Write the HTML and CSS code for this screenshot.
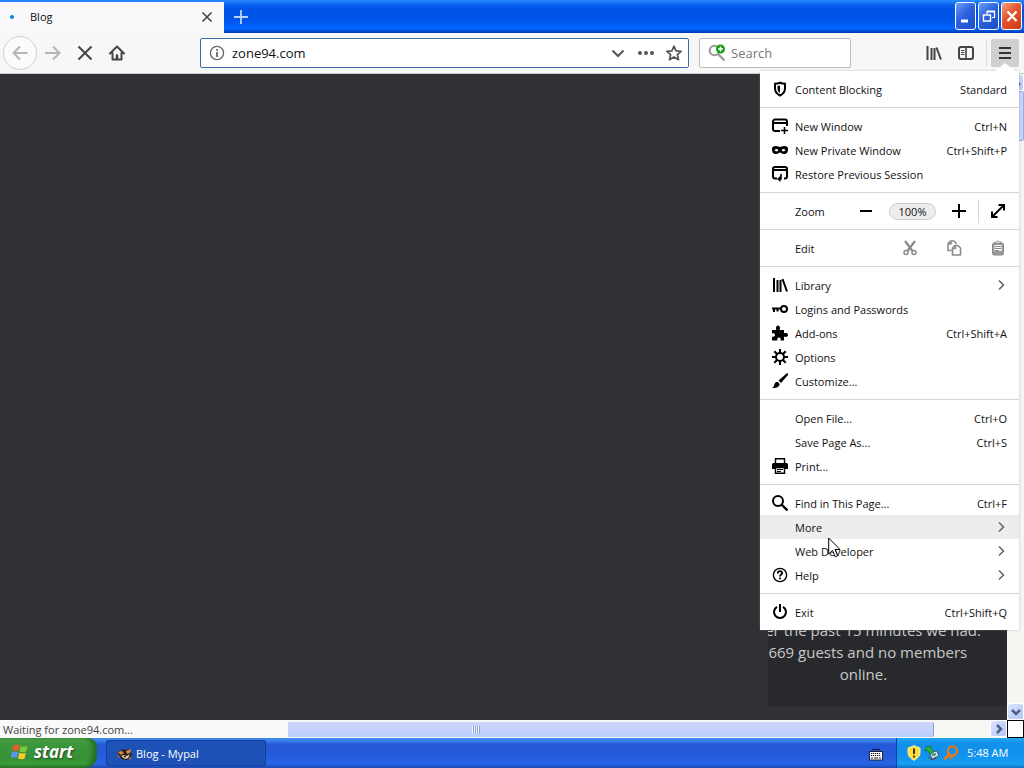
FILE: index.html
```
<!DOCTYPE html>
<html lang="en">
<head>
<meta charset="utf-8">
<title>Blog - Mypal</title>
<link rel="stylesheet" href="styles.css">
</head>
<body>
<header class="titlebar">
  <div class="tab">
    <span class="tab-loading"></span>
    <span class="tab-title">Blog</span>
    <button class="plain tab-close" aria-label="Close tab"><svg width="12" height="12" viewBox="0 0 12 12"><path d="M1.500 1.500l9 9M10.500 1.500l-9 9" stroke="#444" stroke-width="1.600"/></svg></button>
  </div>
  <button class="plain new-tab" aria-label="New tab"><svg width="16" height="16" viewBox="0 0 16 16"><path d="M8 1v14M1 8h14" stroke="#b8d4ff" stroke-width="1.800"/></svg></button>
  <div class="window-buttons">
    <button class="win" aria-label="Minimize"><svg width="18" height="24" viewBox="0 0 18 24"><path d="M4 17h7" stroke="#fff" stroke-width="3"/></svg></button>
    <button class="win" aria-label="Restore"><svg width="18" height="24" viewBox="0 0 18 24" fill="none" stroke="#fff"><path d="M7 10V7.500h7.500v6H12" stroke-width="1.200"/><path d="M7 7.500h8" stroke-width="2"/><path d="M3.500 11h7v6h-7z" stroke-width="1.400"/></svg></button>
    <button class="win win-close" aria-label="Close"><svg width="18" height="24" viewBox="0 0 18 24"><path d="M4.500 7.500l9 9.500M13.500 7.500l-9 9.500" stroke="#fff" stroke-width="2.300"/></svg></button>
  </div>
</header>

<nav class="toolbar">
  <button class="plain back" aria-label="Back"><svg width="16" height="16" viewBox="0 0 16 16" fill="none" stroke="#b5b5b7" stroke-width="2"><path d="M15.500 8H1.500M8 1.500L1.500 8 8 14.500"/></svg></button>
  <button class="plain tool" aria-label="Forward"><svg width="16" height="16" viewBox="0 0 16 16" fill="none" stroke="#b5b5b7" stroke-width="2"><path d="M0 8h14.500M8 1.500L14.500 8 8 14.500"/></svg></button>
  <button class="plain tool" aria-label="Stop"><svg width="16" height="16" viewBox="0 0 16 16" stroke="#444" stroke-width="2"><path d="M1.500 1.500l13 13M14.500 1.500l-13 13"/></svg></button>
  <button class="plain tool" aria-label="Home"><svg width="16" height="16" viewBox="0 0 16 16" fill="none" stroke="#444" stroke-width="2" stroke-linejoin="round" stroke-linecap="round"><path d="M1 8.500L8 1.500l7 7M3.500 8v6.500h9V8"/><path d="M8 14V10.500" stroke-width="2.600"/></svg></button>
  <div class="urlbar">
    <svg width="16" height="16" viewBox="0 0 16 16" fill="none" stroke="#666"><circle cx="8" cy="8" r="6.600" stroke-width="1.300"/><path d="M8 7v5M8 4v1.800" stroke-width="1.800"/></svg>
    <input class="url-input" aria-label="Address" value="zone94.com">
    <button class="plain" aria-label="History"><svg width="16" height="16" viewBox="0 0 16 16" fill="none" stroke="#555" stroke-width="2"><path d="M2.500 5.500L8 11l5.500-5.500"/></svg></button>
    <button class="plain" aria-label="Page actions"><svg width="18" height="16" viewBox="0 0 18 16" fill="#555"><circle cx="3" cy="8" r="2"/><circle cx="9" cy="8" r="2"/><circle cx="15" cy="8" r="2"/></svg></button>
    <button class="plain" aria-label="Bookmark"><svg width="16" height="16" viewBox="0 0 16 16" fill="none" stroke="#555" stroke-width="1.700" stroke-linejoin="round"><path d="M8 1.200l2.100 4.600 5 .5-3.700 3.400 1.100 5L8 12.100l-4.500 2.600 1.100-5L.900 6.300l5-.5z"/></svg></button>
  </div>
  <div class="searchbar">
    <svg width="18" height="18" viewBox="0 0 18 18" fill="none"><circle cx="6.500" cy="6.500" r="4.800" stroke="#999" stroke-width="2"/><path d="M10 10l6.500 6.500" stroke="#999" stroke-width="2.300"/><circle cx="12.500" cy="5" r="4.500" fill="#12a012"/><path d="M12.500 2.500v5M10 5h5" stroke="#fff" stroke-width="1.500"/></svg>
    <input class="search-input" aria-label="Search" placeholder="Search">
  </div>
  <div class="toolbar-end">
    <button class="plain" aria-label="Library"><svg width="16" height="16" viewBox="0 0 16 16" stroke="#444" stroke-width="2"><path d="M1.500 1v14M5.500 3v12M8.500 3v12"/><path d="M10.500 2.500l4.500 12"/></svg></button>
    <button class="plain" aria-label="Sidebars"><svg width="16" height="16" viewBox="0 0 16 16" fill="none" stroke="#444"><rect x="1" y="2" width="14" height="12" rx="2" stroke-width="2"/><path d="M8 2v12" stroke-width="1.600"/><path d="M3 5.500h3.500M3 7.500h3.500M3 9.500h3.500"/></svg></button>
    <span class="menu-slot"><button class="plain menu-button" aria-label="Open menu"><svg width="14" height="14" viewBox="0 0 14 14" stroke="#333" stroke-width="2"><path d="M1 2h12M1 7h12M1 12h12"/></svg></button></span>
  </div>
</nav>

<main class="viewport">
  <div class="page">
    <aside class="online"><p>Over the past 15 minutes we had: 2669 guests and no members online.</p></aside>
  </div>
  <div class="vscroll">
    <span class="sbtn"><svg width="10" height="8" viewBox="0 0 10 8"><path d="M1 6l4-4 4 4" fill="none" stroke="#4d6185" stroke-width="2.500"/></svg></span>
    <span class="vthumb"></span>
    <span class="sbtn vdown"><svg width="10" height="8" viewBox="0 0 10 8"><path d="M1 2l4 4 4-4" fill="none" stroke="#4d6185" stroke-width="2.500"/></svg></span>
  </div>
</main>

<div class="bottom">
  <div class="status">Waiting for zone94.com...</div>
  <div class="hthumb"><span class="grip"></span></div>
  <div class="htrack"></div>
  <span class="sbtn"><svg width="8" height="10" viewBox="0 0 8 10"><path d="M2 1l4 4-4 4" fill="none" stroke="#4d6185" stroke-width="2.500"/></svg></span>
  <span class="corner"></span>
</div>

<footer class="taskbar">
  <button class="start"><svg width="20" height="18" viewBox="0 0 20 18"><path d="M3.500 2.500Q7 .5 9.500 2.500L8.300 8Q5.500 6.500 2.200 8z" fill="#ee5a25"/><path d="M10.700 3Q14 4.500 17.500 2.800L16.200 8.500Q13 10 9.500 8.400z" fill="#7fc93c"/><path d="M2 9.300Q5.500 7.600 8 9.300L6.800 15Q4 13.300.700 15z" fill="#5a93f2"/><path d="M9.300 9.800Q12.500 11.300 15.900 9.800L14.600 15.500Q11.500 17 8 15.300z" fill="#fbc92b"/></svg><span>start</span></button>
  <button class="task"><svg width="16" height="16" viewBox="0 0 16 16"><path d="M1 6l3-1 1-2 3 1 4-1 1 3 2 2-2 4-4 2-4-1-3-3z" fill="#2b2018"/><path d="M1 6l4-1 2 2-3 2zM9 5l5-2-1 4-3 1z" fill="#d98b3c"/><path d="M4 10l3-1 3 1 3-2-2 4-3 1z" fill="#e8d6b0"/><path d="M0 9l3 1-1 2zM12 11l3 1-3 2z" fill="#bb6a28"/><circle cx="8" cy="10.500" r="1" fill="#111"/></svg><span>Blog - Mypal</span></button>
  <svg class="keyboard" width="14" height="14" viewBox="0 0 14 14"><path d="M3 3l2-1 2 1 2-1 2 1" fill="none" stroke="#112" stroke-width="1"/><rect x=".5" y="4.500" width="13" height="8.500" fill="#fff" stroke="#223"/><path d="M2 6.500h10M2 8.500h10" stroke="#111" stroke-width="1.200" stroke-dasharray="1.200 .8"/><path d="M2 11h2M5 11h4M10 11h2" stroke="#111"/></svg>
  <div class="tray">
    <svg width="14" height="16" viewBox="0 0 14 16"><path d="M7 .7l6 2.300v4.500c0 3.500-2.500 6-6 7.800C3.500 13.500 1 11 1 7.500V3z" fill="#ffdf35" stroke="#f3efc0"/><path d="M7 3.500v5.500M7 10.500v2" stroke="#222" stroke-width="1.800"/></svg>
    <svg width="16" height="16" viewBox="0 0 16 16"><path d="M5 7l8-1 2 5-7 3z" fill="#dbe4ea" stroke="#35515f"/><path d="M7.500 9l4-1 1 2-4 1.300z" fill="#4a8594"/><path d="M2 2l6-1-2 2 4 4-3 2-4-4-2 1z" fill="#26b43b" stroke="#0b6f22" stroke-width=".7"/><path d="M4 12l4 3 5-2" fill="none" stroke="#44545c"/></svg>
    <svg width="16" height="16" viewBox="0 0 16 16" fill="none"><circle cx="9.500" cy="6" r="4.600" stroke="#e87817" stroke-width="2.400"/><path d="M6 9.500L1.500 14.500M8 11l.5 3" stroke="#e87817" stroke-width="2.800"/></svg>
    <time>5:48 AM</time>
  </div>
</footer>

<div class="menu">
  <section class="group">
    <button class="item"><svg class="ico" viewBox="0 0 16 16"><path d="M8 1.800c2 .8 3.500 1 5 1v4.700c0 3-2 5.500-5 7-3-1.500-5-4-5-7V2.800c1.500 0 3-.2 5-1z" fill="none" stroke="#000" stroke-width="2"/><path d="M8 4.500v7.500C6.300 11 5.500 9.500 5.500 7.500V5C6.500 5 7.300 4.800 8 4.500z"/></svg><span class="label">Content Blocking</span><span class="key">Standard</span></button>
  </section>
  <section class="group">
    <button class="item"><svg class="ico" viewBox="0 0 16 16" fill="none" stroke="#000" stroke-width="2"><path d="M8 13H3a2 2 0 0 1-2-2V3.500a2 2 0 0 1 2-2h10a2 2 0 0 1 2 2V8M1 5h14" /><path d="M12.500 9v7M9 12.500h7" stroke-width="1.600"/></svg><span class="label">New Window</span><span class="key">Ctrl+N</span></button>
    <button class="item"><svg class="ico" viewBox="0 0 16 16"><path fill-rule="evenodd" d="M0 7c0-2 1-3 4-3 2 0 3 1 4 1s2-1 4-1c3 0 4 1 4 3 0 3-1 5-4 5-2 0-3-1.500-4-1.500S6 12 4 12c-3 0-4-2-4-5zM2.500 8C3.500 9.800 5.500 9.800 6.500 8.300 5.500 6.500 3.500 6.500 2.500 8zM9.500 8.300c1 1.500 3 1.500 4-.3-1-1.500-3-1.500-4 .3z"/></svg><span class="label">New Private Window</span><span class="key">Ctrl+Shift+P</span></button>
    <button class="item"><svg class="ico" viewBox="0 0 16 16" fill="none" stroke="#000" stroke-width="2"><path d="M5 12.500H3a2 2 0 0 1-2-2V3a2 2 0 0 1 2-2h10a2 2 0 0 1 2 2v7.500a2 2 0 0 1-2 2h-1M1 4h14"/><path d="M9 8v5H7" stroke-width="1.600"/><path d="M8.500 9.800v6.200L5 13z" fill="#000" stroke="none"/></svg><span class="label">Restore Previous Session</span></button>
  </section>
  <section class="group">
    <div class="item controls"><span class="label">Zoom</span>
      <button class="plain" aria-label="Zoom out"><svg class="ico" viewBox="0 0 16 16"><path d="M2 8h12" stroke="#000" stroke-width="2"/></svg></button>
      <button class="zoom-level">100%</button>
      <button class="plain" aria-label="Zoom in"><svg class="ico" viewBox="0 0 16 16"><path d="M1 8h14M8 1v14" stroke="#000" stroke-width="2"/></svg></button>
      <span class="divider"></span>
      <button class="plain" aria-label="Full screen"><svg class="ico" viewBox="0 0 16 16"><path d="M3 13L13 3" stroke="#000" stroke-width="2"/><path d="M8.500 1H15v6.500h-2V3H8.500zM1 8.500h2V13h4.500v2H1z"/></svg></button>
    </div>
  </section>
  <section class="group">
    <div class="item controls edit"><span class="label">Edit</span>
      <button class="plain" aria-label="Cut" disabled><svg class="ico" viewBox="0 0 16 16" fill="none" stroke="#8c8c8c"><path d="M3 1l7.500 10M13 1L5.500 11" stroke-width="2.200"/><circle cx="4" cy="12.500" r="2" stroke-width="1.500"/><circle cx="12" cy="12.500" r="2" stroke-width="1.500"/></svg></button>
      <button class="plain" aria-label="Copy" disabled><svg class="ico" viewBox="0 0 16 16" fill="none" stroke="#8c8c8c" stroke-width="1.600" stroke-linejoin="round"><path d="M5.500 10.500H2v-7L4.500 1H8l2 2v1M2 4h3V1M6.500 15h8V8l-2.500-2.500H9L6.500 8zM6.500 8.500H9.500V5.500"/></svg></button>
      <button class="plain" aria-label="Paste" disabled><svg class="ico" viewBox="0 0 16 16"><path d="M4 3h8q1.500 0 1.500 1.500v9q0 1.500-1.500 1.500H4q-1.500 0-1.500-1.500v-9Q2.500 3 4 3z" fill="#999" stroke="#888"/><path d="M4.500 5h7v6h-7z" fill="#fff"/><path d="M5 3.500V2h1.500Q8-.5 9.500 2H11v1.500z" fill="#eee" stroke="#888"/><path d="M5 6.500h6M5 8.500h6M5 10.500h4" stroke="#888"/></svg></button>
    </div>
  </section>
  <section class="group">
    <button class="item"><svg class="ico" viewBox="0 0 16 16" stroke="#000" stroke-width="2"><path d="M2 1v14M5.500 3v12M8.500 3v12M10.500 2l4.500 12.500"/></svg><span class="label">Library</span><svg class="chev" viewBox="0 0 12 12"><path d="M4 1.500L8.500 6 4 10.500"/></svg></button>
    <button class="item"><svg class="ico" viewBox="0 0 16 16" fill="none" stroke="#000" stroke-width="2"><circle cx="12" cy="8" r="3"/><path d="M0 7.500h9"/><path d="M2 8v3M5.500 8v2.500"/></svg><span class="label">Logins and Passwords</span></button>
    <button class="item"><svg class="ico" viewBox="0 0 16 16"><path d="M0 5h4.500C3.500 3.500 4 .5 6 .5s2.500 3 1.500 4.500H12v3.500c1.500-1 4-.5 4 1.500s-2.500 2.500-4 1.500V15.500H8.500c.7-1.500 0-3-1.500-3s-2.200 1.500-1.500 3H0v-4c1.500.7 3 0 3-1.500S1.500 7.800 0 8.500z"/></svg><span class="label">Add-ons</span><span class="key">Ctrl+Shift+A</span></button>
    <button class="item"><svg class="ico" viewBox="0 0 16 16" fill="none" stroke="#000" stroke-width="2"><circle cx="8" cy="8" r="4"/><path d="M8 0v4M8 12v4M0 8h4M12 8h4M2.300 2.300l3 3M10.700 10.700l3 3M13.700 2.300l-3 3M5.300 10.700l-3 3"/></svg><span class="label">Options</span></button>
    <button class="item"><svg class="ico" viewBox="0 0 16 16"><path d="M15.800.2Q16.500 1 15.500 2.500L9 10 6.500 7.500 14 1Q15 0 15.800.2zM5.500 8.800L7.800 11Q7 15.500 0 15q2-1 2.200-3 .5-3 3.300-3.200z"/></svg><span class="label">Customize...</span></button>
  </section>
  <section class="group">
    <button class="item"><span class="ico"></span><span class="label">Open File...</span><span class="key">Ctrl+O</span></button>
    <button class="item"><span class="ico"></span><span class="label">Save Page As...</span><span class="key">Ctrl+S</span></button>
    <button class="item"><svg class="ico" viewBox="0 0 16 16"><path d="M3.500 5V.8h9V5" fill="#fff" stroke="#000" stroke-width="1.400"/><path d="M1.500 5h13Q16 5 16 6.500V11H0V6.500Q0 5 1.500 5z"/><path d="M3.500 9.500h9v5.700h-9z" fill="#fff" stroke="#000" stroke-width="1.400"/><path d="M5 11.500h6M5 13.500h4" stroke="#000"/></svg><span class="label">Print...</span></button>
  </section>
  <section class="group">
    <button class="item"><svg class="ico" viewBox="0 0 16 16" fill="none" stroke="#000"><circle cx="6" cy="6" r="5" stroke-width="2"/><path d="M9.500 9.500l6 6" stroke-width="2.400"/></svg><span class="label">Find in This Page...</span><span class="key">Ctrl+F</span></button>
    <button class="item active"><span class="ico"></span><span class="label">More</span><svg class="chev" viewBox="0 0 12 12"><path d="M4 1.500L8.500 6 4 10.500"/></svg></button>
    <button class="item"><span class="ico"></span><span class="label">Web Developer</span><svg class="chev" viewBox="0 0 12 12"><path d="M4 1.500L8.500 6 4 10.500"/></svg></button>
    <button class="item"><svg class="ico" viewBox="0 0 16 16" fill="none" stroke="#000"><circle cx="8" cy="8" r="6.600" stroke-width="1.400"/><path d="M5.800 6.500C5.800 3.500 10.200 3.500 10.200 6.200 10.200 7.700 8 7.500 8 9.500M8 10.500v1.800" stroke-width="1.800"/></svg><span class="label">Help</span><svg class="chev" viewBox="0 0 12 12"><path d="M4 1.500L8.500 6 4 10.500"/></svg></button>
  </section>
  <section class="group">
    <button class="item"><svg class="ico" viewBox="0 0 16 16" fill="none" stroke="#000" stroke-width="2"><path d="M5 2.800a6 6 0 1 0 6 0M8 0v8"/></svg><span class="label">Exit</span><span class="key">Ctrl+Shift+Q</span></button>
  </section>
</div>
<svg class="cursor" width="13" height="21" viewBox="0 0 13 21"><path d="M.7 1v16l3.800-3.600 2.700 6.300 2.500-1-2.700-6.200h5z" fill="#fff" stroke="#000"/></svg>
</body>
</html>
```
FILE: styles.css
```
* { box-sizing: border-box; }
body {
  margin: 0;
  height: 100vh;
  display: flex;
  flex-direction: column;
  overflow: hidden;
  position: relative;
  font: 11px/16px "Open Sans", "Noto Sans", sans-serif;
  color: #111;
}
button, input { font: inherit; color: inherit; }
svg { display: block; flex: none; }
.plain { border: 0; padding: 0; background: none; display: flex; align-items: center; justify-content: center; flex: none; }

.titlebar {
  flex: none;
  height: 33px;
  display: flex;
  align-items: stretch;
  background: linear-gradient(#2a8bff 0, #0a60ee 5px, #0053e5 10px, #0055ea 20px, #0066ff 28px, #0058e8 30px, #0038b0 33px);
}
.tab { width: 224px; margin-top: 2px; padding: 0 11px 1px 9px; display: flex; align-items: center; background: #f9f9fb; }
.tab-loading { width: 4px; height: 4px; margin: 0 16px 0 1px; border-radius: 2px; background: #0a84d8; }
.tab-title { flex: 1; }
.new-tab { width: 34px; }
.window-buttons { margin-left: auto; display: flex; gap: 2px; padding: 2px 2px 3px; }
.win { width: 21px; height: 28px; padding: 0; border: 1px solid #fff; border-radius: 3px; background: linear-gradient(135deg, #6f9cf5, #2b62e0 45%, #1c4fc8); display: flex; align-items: center; justify-content: center; }
.win-close { background: linear-gradient(135deg, #f0a080, #e25530 45%, #c83a14); }

.toolbar { flex: none; height: 41px; padding: 0 5px 0 3px; display: flex; align-items: center; background: #f7f7f8; border-bottom: 1px solid #ccc; }
.back { width: 34px; height: 34px; border: 1px solid #d0d0d2; border-radius: 50%; background: #fbfbfb; }
.tool { width: 32px; height: 32px; }
.urlbar { flex: 1; height: 30px; margin-left: 67px; padding: 0 6px 0 8px; display: flex; align-items: center; gap: 11px; background: #fff; border: 1px solid #3f69ad; border-radius: 2px; }
.url-input, .search-input { flex: 1; min-width: 0; border: 0; padding: 0; outline: 0; background: none; font-size: 13px; line-height: 20px; }
.url-input { margin-left: -4px; }
.searchbar { width: 152px; height: 30px; margin-left: 10px; padding: 0 8px; display: flex; align-items: center; gap: 5px; background: #fff; border: 1px solid #bbb; border-radius: 2px; }
.search-input::placeholder { color: #777; opacity: 1; }
.toolbar-end { margin-left: 75px; display: flex; align-items: center; gap: 16px; }
.menu-slot { margin-left: -4px; padding-left: 4px; border-left: 1px solid #ddd; }
.menu-button { width: 28px; height: 28px; border-radius: 2px; background: #d0d0d1; }

.viewport { flex: 1; min-height: 0; display: flex; background: #303134; }
.page { flex: 1; display: flex; justify-content: flex-end; align-items: flex-end; padding-bottom: 14px; }
.online { width: 239px; height: 100px; overflow: hidden; background: #28292c; color: #c8c8c8; font-size: 15px; line-height: 22px; text-align: center; }
.online p { margin: 13px 0 0 -48px; padding: 0 24px; }
.vscroll { width: 17px; display: flex; flex-direction: column; background: #f5f5f2; }
.sbtn { flex: none; width: 17px; height: 17px; display: flex; align-items: center; justify-content: center; background: linear-gradient(135deg, #dbe4ff, #b4c6f6); border: 1px solid #fff; border-radius: 3px; }
.vthumb { height: 50px; border: 1px solid #98aee0; border-radius: 2px; background: #c4d2fc; }
.vdown { margin-top: auto; }

.bottom { flex: none; height: 18px; display: flex; align-items: stretch; background: #f7f7f4; }
.status { width: 288px; padding-left: 3px; line-height: 20px; background: #fafafa; color: #444; }
.hthumb { flex: 1; margin: 2px 0 1px; display: flex; justify-content: center; align-items: center; padding-right: 270px; background: linear-gradient(#d0d5fb, #b8d0fc); border-right: 1px solid #8ea6dd; border-radius: 0 2px 2px 0; }
.grip { width: 8px; height: 8px; background: repeating-linear-gradient(90deg, #eef4ff 0 1px, #8ca5dc 1px 2px); }
.htrack { width: 56px; }
.corner { width: 17px; border: 1px solid #000; background: #fff; }

.taskbar { flex: none; height: 30px; display: flex; align-items: stretch; background: linear-gradient(#3f8cf0 0, #3a80ea 3px, #2459d8 6px, #245bdb 18px, #2566e6 26px, #1c48b0 30px); color: #fff; }
.start { width: 97px; padding: 0 0 2px 10px; border: 0; border-radius: 0 9px 12px 0; display: flex; align-items: center; gap: 4px; color: #fff; background: linear-gradient(#5eac56 0, #3c9a3c 5px, #378f37 20px, #3aa03a 26px, #2b7a2b 30px); box-shadow: inset -4px 0 5px #226b22; font: italic bold 17px/24px "Open Sans", sans-serif; text-shadow: 1px 1px 2px #1c4a1c; }
.task { width: 160px; margin: 2px 0 2px 9px; padding: 2px 10px 0; border: 1px solid #173f9c; border-radius: 2px; background: #1e52b7; color: #fff; display: flex; align-items: center; gap: 3px; }
.keyboard { margin: 9px 13px 0 auto; }
.tray { width: 128px; padding-left: 10px; display: flex; align-items: center; gap: 3px; border-left: 1px solid #0a3e9c; background: linear-gradient(#22a8f5 0, #1290ea 5px, #1192ec 18px, #18a0f5 26px, #0f70c0 30px); }
.tray time { margin-left: 5px; }

.menu { position: absolute; top: 71px; right: 5px; width: 259px; background: #fff; box-shadow: 0 0 2px #8888; }
.menu::before { content: ""; position: absolute; top: -8px; right: 4px; width: 20px; height: 8px; background: #fff; clip-path: polygon(50% 0, 100% 100%, 0 100%); }
.group { padding: 6px 0; }
.group + .group { border-top: 1px solid #d6d6d6; }
.item { width: 100%; height: 24px; padding: 0 12px; border: 0; background: none; display: flex; align-items: center; gap: 7px; text-align: left; }
.active { background: #ededed; }
.label { flex: 1; padding-top: 2px; }
.key { padding-top: 1px; }
.ico { width: 16px; height: 16px; flex: none; }
.chev { width: 12px; height: 12px; fill: none; stroke: #666; stroke-width: 1.6; }
.controls { padding: 0 13px 0 35px; gap: 15px; }
.zoom-level { width: 47px; height: 17px; padding: 0; border: 1px solid #ccc; border-radius: 9px; background: #ececec; line-height: 15px; }
.divider { width: 1px; height: 24px; margin: 0 -4px; background: #d6d6d6; }
.edit { gap: 28px; }
.cursor { position: absolute; left: 828px; top: 537px; }
```
